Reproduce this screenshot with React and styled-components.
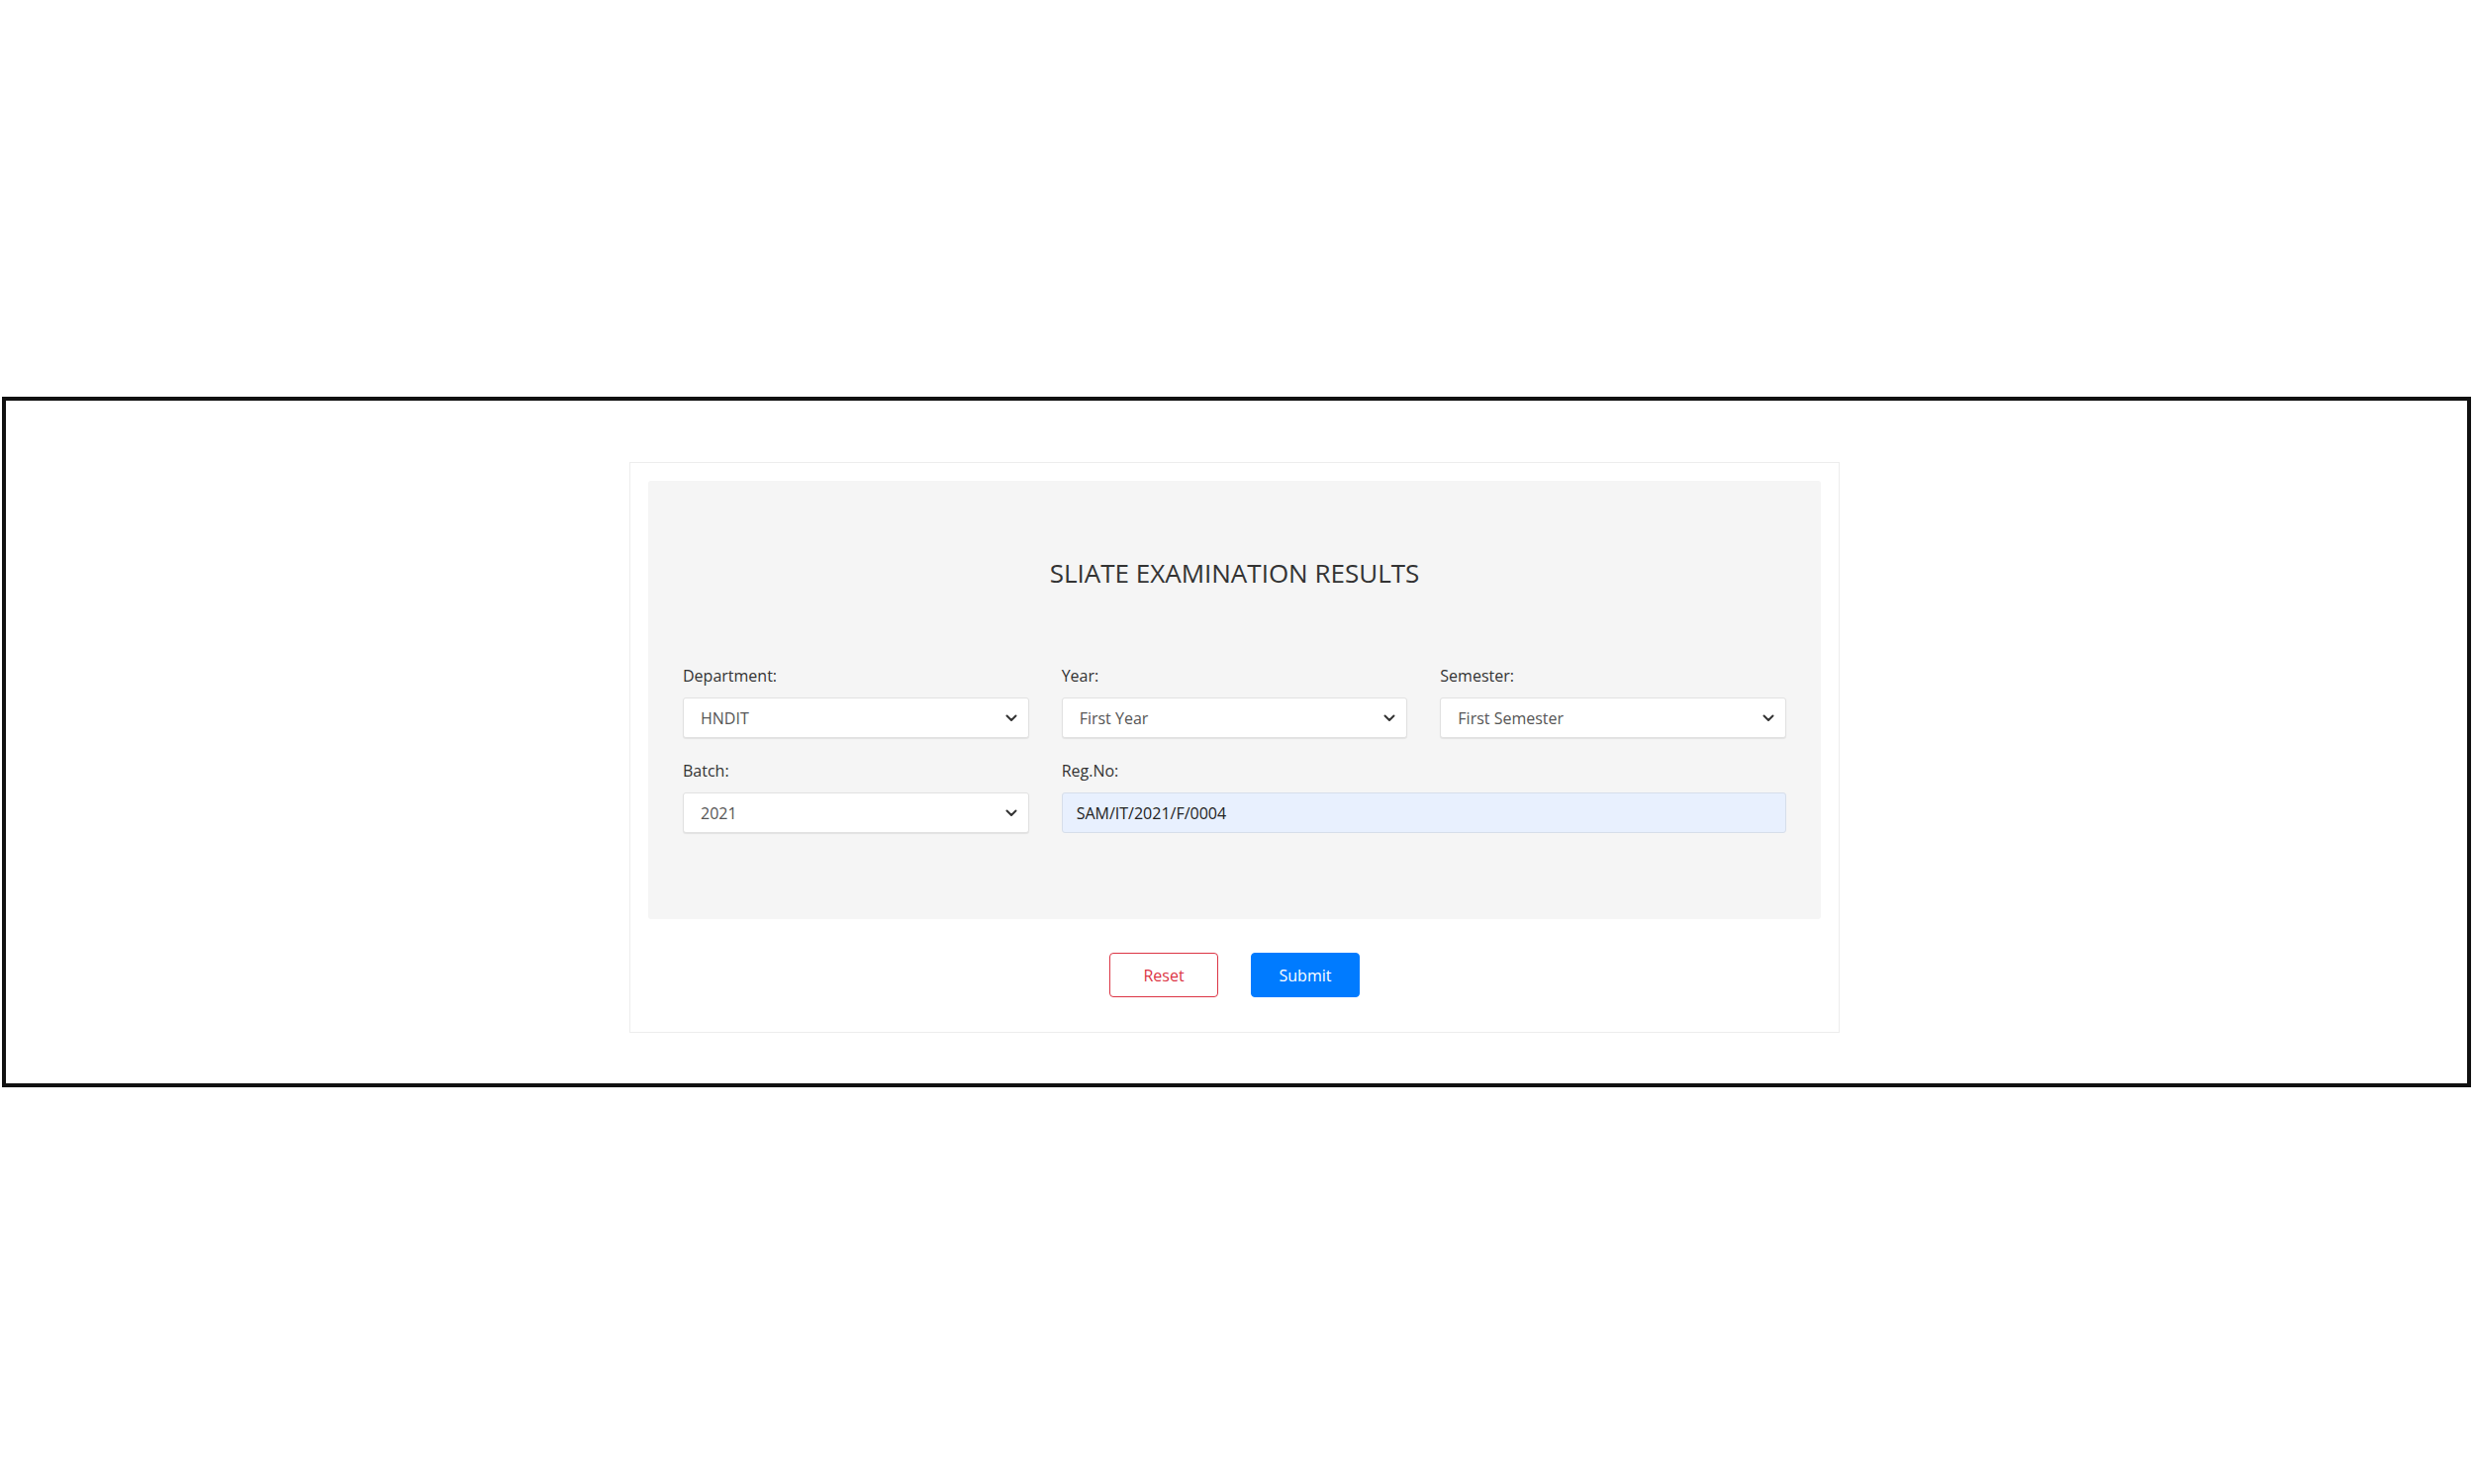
import styled, { createGlobalStyle } from "styled-components"

const GlobalStyle = createGlobalStyle`
  html, body {
    margin: 0;
    padding: 0;
    background: #ffffff;
    font-family: "Open Sans", "Liberation Sans", sans-serif;
  }
  * { box-sizing: border-box; }
`

function Chevron() {
    return (
        <svg width="12" height="8" viewBox="0 0 12 8" fill="none">
            <path d="M1.5 1.5 L6 6 L10.5 1.5" stroke="#333" strokeWidth="2" strokeLinecap="round" strokeLinejoin="round" />
        </svg>
    )
}

function SelectField({ label, value, options }) {
    return (
        <Field>
            <Label>{label}</Label>
            <SelectBox>
                <Select defaultValue={value}>
                    {options.map((o) => <option key={o}>{o}</option>)}
                </Select>
                <Chevron />
            </SelectBox>
        </Field>
    )
}

export default function App() {
    return (
        <Page>
            <GlobalStyle />
            <Frame>
                <Card>
                    <Panel>
                        <Title>SLIATE EXAMINATION RESULTS</Title>
                        <FormGrid>
                            <SelectField label="Department:" value="HNDIT" options={["HNDIT", "HNDA", "HNDE"]} />
                            <SelectField label="Year:" value="First Year" options={["First Year", "Second Year"]} />
                            <SelectField label="Semester:" value="First Semester" options={["First Semester", "Second Semester"]} />
                            <SelectField label="Batch:" value="2021" options={["2019", "2020", "2021"]} />
                            <Field span={2}>
                                <Label>Reg.No:</Label>
                                <TextInput defaultValue="SAM/IT/2021/F/0004" />
                            </Field>
                        </FormGrid>
                    </Panel>
                    <ButtonRow>
                        <Button type="button" variant="outline">Reset</Button>
                        <Button type="button" variant="solid">Submit</Button>
                    </ButtonRow>
                </Card>
            </Frame>
        </Page>
    )
}

const Page = styled.div`
  min-height: 100vh;
  display: flex;
  align-items: center;
  padding: 0 3px 0 2px;
`

const Frame = styled.div`
  width: 100%;
  height: 698px;
  border: 4px solid #111;
  display: flex;
  justify-content: center;
  align-items: flex-start;
  padding-top: 62px;
  padding-right: 4px;
`

const Card = styled.div`
  width: 1223px;
  border: 1px solid #ededed;
  padding: 18px 18px 35px 18px;
  background: #ffffff;
`

const Panel = styled.div`
  background: #f5f5f5;
  border-radius: 3px;
  padding: 78px 35px 87px 35px;
`

const Title = styled.h2`
  margin: 0 0 76px 0;
  text-align: center;
  font-size: 26px;
  line-height: 31px;
  font-weight: 400;
  color: #333;
`

const FormGrid = styled.div`
  display: grid;
  grid-template-columns: repeat(3, 1fr);
  column-gap: 33px;
  row-gap: 21px;
`

const Field = styled.div`
  display: flex;
  flex-direction: column;
  grid-column: span ${(props) => props.span || 1};
`

const Label = styled.label`
  font-size: 16px;
  line-height: 24px;
  color: #333;
  margin-bottom: 10px;
`

const SelectBox = styled.div`
  height: 41px;
  display: flex;
  align-items: center;
  background: #ffffff;
  border: 1px solid #e1e1e1;
  border-radius: 3px;
  box-shadow: 0 1px 1px rgba(0, 0, 0, 0.08);
  padding-right: 11px;
`

const Select = styled.select`
  flex: 1;
  height: 100%;
  appearance: none;
  border: none;
  outline: none;
  background: transparent;
  padding-left: 17px;
  font-family: "Open Sans", "Liberation Sans", sans-serif;
  font-size: 16px;
  color: #555;
`

const TextInput = styled.input`
  height: 41px;
  background: #e8f0fe;
  border: 1px solid #d6deea;
  border-radius: 3px;
  padding: 0 14px;
  font-family: "Open Sans", "Liberation Sans", sans-serif;
  font-size: 16px;
  color: #222;
  outline: none;
`

const ButtonRow = styled.div`
  display: flex;
  justify-content: center;
  gap: 33px;
  margin-top: 34px;
`

const Button = styled.button`
  width: 110px;
  height: 45px;
  border-radius: 4px;
  font-family: "Open Sans", "Liberation Sans", sans-serif;
  font-size: 16px;
  cursor: pointer;
  border: 1px solid ${(props) => props.variant === "solid" ? "#007bff" : "#dc3545"};
  background: ${(props) => props.variant === "solid" ? "#007bff" : "#ffffff"};
  color: ${(props) => props.variant === "solid" ? "#ffffff" : "#dc3545"};
`
